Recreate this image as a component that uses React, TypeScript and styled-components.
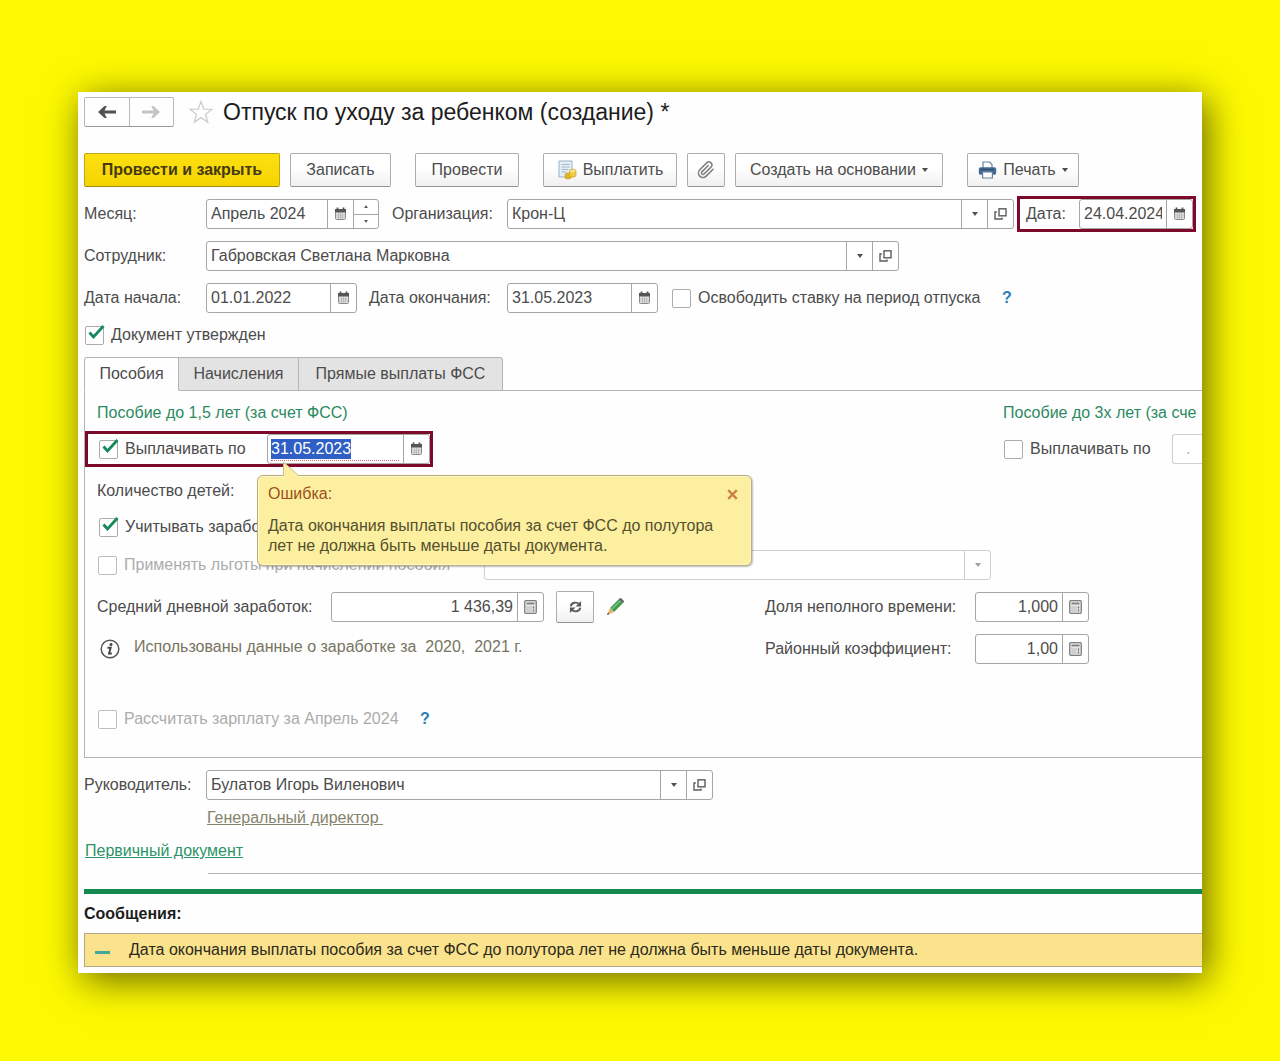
import React, { useEffect, useRef, useState } from 'react';
import styled, { createGlobalStyle } from 'styled-components';

const GlobalStyle = createGlobalStyle`
  * { box-sizing: border-box; }
  body { margin: 0; background: #fdf900; }
  body, button, input, select {
    font-family: "Liberation Sans", Arial, sans-serif;
    font-size: 16px;
    line-height: 20px;
    color: #4c4c4c;
  }
`;

const line = '#a6a6a6';

const Page = styled.main`
  padding: 92px 78px 88px;
`;
const Window = styled.section`
  display: flex;
  flex-direction: column;
  padding: 5px 0 6px 6px;
  background: #fefefe;
  box-shadow: 5px 7px 36px rgba(0, 0, 0, 0.6);
  overflow: hidden;
`;
const TitleBar = styled.header`
  display: flex;
  align-items: center;
  height: 30px;
`;
const NavGroup = styled.div`
  display: flex;
  width: 90px;
  height: 30px;
  border: 1px solid #b9b9b9;
  border-bottom-color: #999;
  border-radius: 2px;
`;
const NavButton = styled.button<{ $muted?: boolean }>`
  flex: 1;
  display: grid;
  place-items: center;
  padding: 0;
  border: 0;
  background: none;
  color: ${(p) => (p.$muted ? '#c4c4c4' : '#505050')};
  & + & { border-left: 1px solid #b9b9b9; }
`;
const StarButton = styled.button`
  display: grid;
  place-items: center;
  width: 24px;
  height: 24px;
  margin: 0 10px 0 15px;
  padding: 0;
  border: 0;
  background: none;
`;
const Title = styled.h1`
  margin: 0;
  font-size: 23px;
  line-height: 28px;
  font-weight: 400;
  color: #1c1c1c;
  white-space: nowrap;
`;
const Toolbar = styled.div`
  display: flex;
  gap: 24px;
  margin-top: 26px;
`;
const ToolGroup = styled.div`
  display: flex;
  gap: 10px;
`;
const ToolButton = styled.button<{ $w: number; $primary?: boolean }>`
  display: flex;
  align-items: center;
  justify-content: center;
  gap: 6px;
  width: ${(p) => p.$w}px;
  height: 34px;
  padding: 0;
  border: 1px solid ${(p) => (p.$primary ? '#c0a51a' : '#adadad')};
  border-bottom-color: ${(p) => (p.$primary ? '#a08a18' : '#919191')};
  border-radius: 2px;
  background: ${(p) => (p.$primary ? 'linear-gradient(#fde011, #f5d400)' : 'linear-gradient(#ffffff 40%, #f0f0f0)')};
  color: ${(p) => (p.$primary ? '#453a10' : '#4c4c4c')};
  font-weight: ${(p) => (p.$primary ? 700 : 400)};
  white-space: nowrap;
`;
const Row = styled.div<{ $mt?: number }>`
  display: flex;
  align-items: center;
  min-height: 30px;
  margin-top: ${(p) => p.$mt ?? 12}px;
  padding-right: 9px;
  white-space: nowrap;
`;
const Label = styled.label<{ $w?: number; $ml?: number }>`
  flex: none;
  width: ${(p) => (p.$w ? `${p.$w}px` : 'auto')};
  margin-left: ${(p) => p.$ml ?? 0}px;
`;
const Field = styled.div<{ $w?: number; $faint?: boolean }>`
  position: relative;
  display: flex;
  flex: ${(p) => (p.$w ? 'none' : '1 1 0')};
  width: ${(p) => (p.$w ? `${p.$w}px` : 'auto')};
  min-width: 0;
  height: 30px;
  border: 1px solid ${(p) => (p.$faint ? '#cfcfcf' : line)};
  border-radius: 3px;
  background: #fff;
`;
const Input = styled.input<{ $right?: boolean; $error?: boolean; $faint?: boolean }>`
  flex: 1 1 0;
  min-width: 0;
  margin: ${(p) => (p.$error ? '0 4px 2px 3px' : '0')};
  padding: ${(p) => (p.$error ? '2px 0 0' : '0 4px 0 4px')};
  border: 0;
  border-bottom: ${(p) => (p.$error ? '1px dotted #d06a7a' : '0')};
  outline: 0;
  background: none;
  color: ${(p) => (p.$faint ? '#acacac' : '#4c4c4c')};
  text-align: ${(p) => (p.$right ? 'right' : 'left')};
  &::selection { background: #2f5fc4; color: #fff; }
`;
const Select = styled.select`
  flex: 1;
  min-width: 0;
  border: 0;
  background: none;
  appearance: none;
`;
const FieldButton = styled.button<{ $faint?: boolean }>`
  flex: none;
  display: grid;
  place-items: center;
  width: 26px;
  padding: 0;
  border: 0;
  border-left: 1px solid ${(p) => (p.$faint ? '#cfcfcf' : line)};
  background: none;
  color: ${(p) => (p.$faint ? '#a0a0a0' : '#505050')};
`;
const Spinner = styled.div`
  display: flex;
  flex-direction: column;
  width: 25px;
  border-left: 1px solid ${line};
`;
const SpinButton = styled.button`
  flex: 1;
  display: grid;
  place-items: center;
  padding: 0;
  border: 0;
  background: none;
  & + & { border-top: 1px solid ${line}; }
`;
const Marked = styled.div<{ $w: number; $ml?: number }>`
  display: flex;
  align-items: center;
  flex: none;
  width: ${(p) => p.$w}px;
  height: 30px;
  margin-left: ${(p) => p.$ml ?? 0}px;
  outline: 3px solid #7d0a2b;
`;
const Check = styled.label<{ $muted?: boolean; $ml?: number; $w?: number }>`
  display: inline-flex;
  flex: none;
  align-items: center;
  gap: 7px;
  width: ${(p) => (p.$w ? `${p.$w}px` : 'auto')};
  margin-left: ${(p) => p.$ml ?? 0}px;
  color: ${(p) => (p.$muted ? '#acacac' : '#4c4c4c')};
`;
const CheckHolder = styled.span`
  position: relative;
  display: inline-flex;
  svg { position: absolute; left: 2px; top: -2px; pointer-events: none; }
`;
const CheckInput = styled.input`
  appearance: none;
  width: 19px;
  height: 19px;
  margin: 0;
  border: 1px solid #acacac;
  border-radius: 2px;
  background: #fff;
  &:disabled { border-color: #bdbdbd; }
`;
const Help = styled.button`
  margin-left: 12px;
  padding: 0;
  border: 0;
  background: none;
  color: #2b7fb5;
  font-weight: 700;
`;
const Tabs = styled.div`
  display: flex;
  margin-top: 7px;
`;
const Tab = styled.button<{ $w: number; $active?: boolean }>`
  position: relative;
  width: ${(p) => p.$w}px;
  height: 34px;
  margin-bottom: -1px;
  padding: 0;
  border: 1px solid #b4b4b4;
  border-left-width: ${(p) => (p.$active ? 1 : 0)}px;
  border-bottom-color: ${(p) => (p.$active ? '#fefefe' : '#b4b4b4')};
  background: ${(p) => (p.$active ? '#fefefe' : '#e3e3e3')};
  &:first-child { border-top-left-radius: 3px; }
  &:last-child { border-top-right-radius: 3px; }
`;
const Panel = styled.div`
  display: flex;
  flex-direction: column;
  padding: 7px 0 23px 12px;
  border: solid #b4b4b4;
  border-width: 1px 0 1px 1px;
`;
const Split = styled.div`
  display: grid;
  grid-template-columns: minmax(0, 1fr) 199px;
`;
const GroupTitle = styled.div`
  line-height: 30px;
  color: #2c8a5f;
  white-space: nowrap;
`;
const SideRow = styled(Row)`
  padding-right: 0;
  overflow: hidden;
`;
const OpenEndField = styled(Field)`
  border-right: 0;
  border-radius: 3px 0 0 3px;
`;
const Bubble = styled.div`
  position: absolute;
  z-index: 2;
  top: 40px;
  left: -11px;
  width: 495px;
  height: 91px;
  padding: 8px 10px;
  border: 1px solid #b9ad7c;
  border-radius: 6px;
  background: #fcefa0;
  box-shadow: inset 0 0 0 1px #fff8cf, 1px 1px 2px rgba(0, 0, 0, 0.25);
  color: #55502f;
`;
const Tail = styled.svg`
  position: absolute;
  left: 24px;
  top: -15px;
`;
const BubbleHead = styled.div`
  display: flex;
  align-items: center;
  justify-content: space-between;
  color: #9a4f1c;
`;
const CloseButton = styled.button`
  display: grid;
  padding: 0;
  margin-right: 3px;
  border: 0;
  background: none;
`;
const BubbleText = styled.p`
  margin: 12px 0 0;
`;
const Earnings = styled.div`
  display: grid;
  grid-template-columns: 668px auto;
`;
const SquareButton = styled.button`
  display: grid;
  place-items: center;
  width: 38px;
  height: 32px;
  margin: -1px 0 -1px 12px;
  padding: 0;
  border: 1px solid #adadad;
  border-bottom-color: #919191;
  border-radius: 2px;
  background: linear-gradient(#fff 40%, #f0f0f0);
`;
const PlainButton = styled.button`
  display: grid;
  margin-left: 12px;
  padding: 0;
  border: 0;
  background: none;
`;
const Info = styled.span`
  margin-left: 14px;
  padding-bottom: 5px;
  color: #77745f;
  white-space: pre;
`;
const Link = styled.a<{ $tone: string; $ml: number; $mt: number }>`
  align-self: flex-start;
  margin: ${(p) => p.$mt}px 0 0 ${(p) => p.$ml}px;
  color: ${(p) => p.$tone};
  white-space: pre;
`;
const Rule = styled.hr`
  width: calc(100% - 124px);
  height: 1px;
  margin: 12px 0 0 124px;
  border: 0;
  background: #b4b4b4;
`;
const Divider = styled.div`
  height: 5px;
  margin-top: 15px;
  background: #15884f;
`;
const MessagesTitle = styled.h2`
  margin: 10px 0 9px;
  font-size: 16px;
  line-height: 20px;
  font-weight: 700;
  color: #1c1c1c;
`;
const Message = styled.div`
  display: flex;
  align-items: center;
  gap: 19px;
  height: 34px;
  padding-left: 10px;
  border: solid #b0a888;
  border-width: 1px 0 1px 1px;
  background: #fae38c;
  color: #2c2a1c;
  white-space: nowrap;
`;
const Dash = styled.span`
  width: 15px;
  height: 3px;
  margin-top: 4px;
  background: #45a79a;
`;

const Arrow = ({ flip }: { flip?: boolean }) => (
  <svg width="18" height="12" viewBox="0 0 18 12" fill="currentColor" transform={flip ? 'scale(-1 1)' : undefined}>
    <path d="M0 6 6.500 0h2.300L6.500 4.600H18v2.800H6.500L8.800 12H6.500z" />
  </svg>
);
const Star = () => (
  <svg width="24" height="24" viewBox="0 0 24 24" fill="#fff" stroke="#cdcdcd" strokeWidth="1.3">
    <path d="m12 1.500 2.800 7.600 8 .3-6.300 5 2.200 7.700L12 17.600l-6.700 4.500 2.200-7.700-6.300-5 8-.3z" />
  </svg>
);
const Calendar = () => (
  <svg width="13" height="14" viewBox="0 0 13 14">
    <rect x="1.500" y="2.500" width="10" height="10" rx="1" fill="#e6e6e6" stroke="#8a8a8a" />
    <path d="M1 2h11v3.500H1z" fill="#555" />
    <path d="M3.500 .5v2.500M9.500 .5v2.500" stroke="#555" strokeWidth="1.800" />
    <path d="M2 8h9M2 10.200h9M4.500 6v6M6.500 6v6M8.500 6v6" stroke="#b0b0b0" strokeWidth=".7" />
  </svg>
);
const Calculator = () => (
  <svg width="13" height="14" viewBox="0 0 13 14">
    <rect x=".7" y=".7" width="11.600" height="12.600" rx="1" fill="#e6e6e6" stroke="#808080" strokeWidth="1.300" />
    <path d="M2.500 3.500h8" stroke="#808080" strokeWidth="1.800" />
    <path d="M2.500 7h5M2.500 9h5M2.500 11h5" stroke="#a0a0a0" strokeDasharray="1.200 .8" />
    <path d="M9.500 6.500v2M9.500 9.500v2" stroke="#707070" strokeWidth="1.300" />
  </svg>
);
const Caret = () => (
  <svg width="6" height="4" viewBox="0 0 6 4"><path d="M0 0h6L3 4z" fill="currentColor" /></svg>
);
const TinyMark = ({ up }: { up?: boolean }) => (
  <svg width="4" height="3" viewBox="0 0 4 3"><path d={up ? 'M0 3h4L2 0z' : 'M0 0h4L2 3z'} fill="#606060" /></svg>
);
const OpenIcon = () => (
  <svg width="13" height="12" viewBox="0 0 13 12" fill="none" stroke="#5c5c5c" strokeWidth="1.400">
    <rect x="5" y=".8" width="7" height="7" />
    <path d="M2.800 4H1v7h7V9.500" />
  </svg>
);
const Tick = () => (
  <svg width="19" height="18" viewBox="0 0 19 18" fill="none">
    <path d="M2.500 8.500 6.500 13 16.500 2" stroke="#16885a" strokeWidth="2.800" />
  </svg>
);
const PayIcon = () => (
  <svg width="20" height="20" viewBox="0 0 20 20">
    <path d="M2 1h13v16H2z" fill="#e4eef6" stroke="#9db2c4" />
    <path d="M4.500 4.500h8M4.500 7h8M4.500 9.500h7M4.500 12h5" stroke="#a4bacb" />
    <path d="M8 14.500c0-2 6-2 6 0v3c0 2-6 2-6 0z" fill="#e3b62a" stroke="#c99a1b" strokeWidth=".6" />
    <path d="M12.500 11c0-2.200 6.500-2.200 6.500 0v4.500c0 2.200-6.500 2.200-6.500 0z" fill="#f0ca45" stroke="#c99a1b" strokeWidth=".6" />
    <ellipse cx="15.700" cy="11" rx="2.800" ry="1.300" fill="#fae58c" />
  </svg>
);
const Clip = () => (
  <svg width="18" height="18" viewBox="0 0 24 24" fill="none" stroke="#7d7d7d" strokeWidth="2" strokeLinecap="round">
    <path d="m21.400 11-9.200 9.200a6 6 0 0 1-8.500-8.500l9.200-9.200a4 4 0 0 1 5.700 5.700l-9.200 9.200a2 2 0 0 1-2.900-2.900L15 6.100" />
  </svg>
);
const Printer = () => (
  <svg width="19" height="18" viewBox="0 0 19 18">
    <path d="M5 7V1h6.500L14 3.500V7" fill="#fff" stroke="#68839f" strokeWidth="1.200" />
    <rect x=".8" y="6.300" width="17.400" height="7.500" rx="1.800" fill="#456b93" />
    <path d="M3 8.500h13" stroke="#2e4e70" strokeWidth="1.200" />
    <path d="M4.600 11h9.800v6H4.600z" fill="#fff" stroke="#68839f" strokeWidth="1.200" />
  </svg>
);
const Refresh = () => (
  <svg width="13" height="12" viewBox="0 0 15 14" fill="none" stroke="#5a5a5a" strokeWidth="2.200">
    <path d="M2 6.200C2.500 1.500 9 .5 12 4M13 7.800C12.500 12.500 6 13.500 3 10" />
    <path d="M14 0v6.500H7.500zM1 14V7.500h6.500z" fill="#5a5a5a" stroke="none" />
  </svg>
);
const Pencil = () => (
  <svg width="18" height="18" viewBox="0 0 18 18">
    <path d="m4 10 8.500-8.500 4 4L8 14z" fill="#3f9b4c" />
    <path d="m5.500 11.500 8.500-8.500" stroke="#7cc680" strokeWidth="1.500" />
    <path d="m12.500 1.500 1-1q1-1 2 0l2 2q1 1 0 2l-1 1z" fill="#5e6f62" />
    <path d="M4 10 1 17l7-3z" fill="#e0b66e" />
    <path d="M2 14.500 1 17l2.500-1z" fill="#59452c" />
  </svg>
);
const InfoIcon = () => (
  <svg width="20" height="20" viewBox="0 0 20 20" fill="none" stroke="#555">
    <circle cx="10" cy="10" r="8.800" strokeWidth="1.500" />
    <circle cx="11" cy="5.500" r="1.500" fill="#444" stroke="none" />
    <path d="M7.500 8.800h3.200L9 14.500h2.800" stroke="#444" strokeWidth="1.900" />
  </svg>
);
const CloseIcon = () => (
  <svg width="11" height="11" viewBox="0 0 11 11"><path d="m1.200 1.200 8.600 8.600m0-8.600-8.600 8.600" stroke="#cc8146" strokeWidth="2.400" /></svg>
);

type ButtonKind = 'calendar' | 'calculator' | 'list' | 'open';
const kinds: Record<ButtonKind, { name: string; icon: React.ReactNode }> = {
  calendar: { name: 'Выбрать дату', icon: <Calendar /> },
  calculator: { name: 'Калькулятор', icon: <Calculator /> },
  list: { name: 'Выбрать из списка', icon: <Caret /> },
  open: { name: 'Открыть', icon: <OpenIcon /> },
};

interface TextFieldProps {
  id: string;
  value: string;
  w?: number;
  right?: boolean;
  buttons: ButtonKind[];
  children?: React.ReactNode;
}
const TextField = ({ id, value, w, right, buttons, children }: TextFieldProps) => {
  const [text, setText] = useState(value);
  return (
    <Field $w={w}>
      <Input id={id} value={text} $right={right} onChange={(e) => setText(e.target.value)} />
      {buttons.map((kind) => (
        <FieldButton key={kind} type="button" aria-label={kinds[kind].name}>{kinds[kind].icon}</FieldButton>
      ))}
      {children}
    </Field>
  );
};

interface CheckBoxProps {
  text: string;
  on?: boolean;
  disabled?: boolean;
  ml?: number;
  w?: number;
}
const CheckBox = ({ text, on = false, disabled, ml, w }: CheckBoxProps) => {
  const [checked, setChecked] = useState(on);
  return (
    <Check $muted={disabled} $ml={ml} $w={w}>
      <CheckHolder>
        <CheckInput type="checkbox" checked={checked} disabled={disabled} onChange={(e) => setChecked(e.target.checked)} />
        {checked && <Tick />}
      </CheckHolder>
      {text}
    </Check>
  );
};

const PayUntil = () => {
  const ref = useRef<HTMLInputElement>(null);
  const [open, setOpen] = useState(true);
  const [date, setDate] = useState('31.05.2023');
  useEffect(() => {
    ref.current?.focus({ preventScroll: true });
    ref.current?.select();
  }, []);
  return (
    <Field $w={163}>
      <Input ref={ref} aria-label="Выплачивать по" value={date} $error onChange={(e) => setDate(e.target.value)} />
      <FieldButton type="button" aria-label="Выбрать дату"><Calendar /></FieldButton>
      {open && (
        <Bubble role="alert">
          <Tail width="20" height="17" viewBox="0 0 20 17">
            <path d="M1.500 17V1L17 15.500V17z" fill="#fcefa0" />
            <path d="M1.500 15V1L17 15" fill="none" stroke="#c9bd8a" />
          </Tail>
          <BubbleHead>
            <span>Ошибка:</span>
            <CloseButton type="button" aria-label="Закрыть" onClick={() => setOpen(false)}><CloseIcon /></CloseButton>
          </BubbleHead>
          <BubbleText>Дата окончания выплаты пособия за счет ФСС до полутора<br />лет не должна быть меньше даты документа.</BubbleText>
        </Bubble>
      )}
    </Field>
  );
};

export default function App() {
  return (
    <Page>
      <GlobalStyle />
      <Window>
        <TitleBar>
          <NavGroup>
            <NavButton type="button" aria-label="Назад"><Arrow /></NavButton>
            <NavButton type="button" aria-label="Вперед" $muted><Arrow flip /></NavButton>
          </NavGroup>
          <StarButton type="button" aria-label="В избранное"><Star /></StarButton>
          <Title>Отпуск по уходу за ребенком (создание) *</Title>
        </TitleBar>

        <Toolbar>
          <ToolGroup>
            <ToolButton type="button" $w={196} $primary>Провести и закрыть</ToolButton>
            <ToolButton type="button" $w={101}>Записать</ToolButton>
          </ToolGroup>
          <ToolButton type="button" $w={104}>Провести</ToolButton>
          <ToolGroup>
            <ToolButton type="button" $w={134}><PayIcon />Выплатить</ToolButton>
            <ToolButton type="button" $w={38} aria-label="Присоединенные файлы"><Clip /></ToolButton>
            <ToolButton type="button" $w={208}>Создать на основании<Caret /></ToolButton>
          </ToolGroup>
          <ToolButton type="button" $w={112}><Printer />Печать<Caret /></ToolButton>
        </Toolbar>

        <Row>
          <Label htmlFor="month" $w={122}>Месяц:</Label>
          <TextField id="month" value="Апрель 2024" w={173} buttons={['calendar']}>
            <Spinner>
              <SpinButton type="button" aria-label="Следующий месяц"><TinyMark up /></SpinButton>
              <SpinButton type="button" aria-label="Предыдущий месяц"><TinyMark /></SpinButton>
            </Spinner>
          </TextField>
          <Label htmlFor="org" $w={115} $ml={13}>Организация:</Label>
          <TextField id="org" value="Крон-Ц" buttons={['list', 'open']} />
          <Marked $w={173} $ml={6}>
            <Label htmlFor="date" $w={53} $ml={6}>Дата:</Label>
            <TextField id="date" value="24.04.2024" buttons={['calendar']} />
          </Marked>
        </Row>

        <Row>
          <Label htmlFor="employee" $w={122}>Сотрудник:</Label>
          <TextField id="employee" value="Габровская Светлана Марковна" w={693} buttons={['list', 'open']} />
        </Row>

        <Row>
          <Label htmlFor="start" $w={122}>Дата начала:</Label>
          <TextField id="start" value="01.01.2022" w={151} buttons={['calendar']} />
          <Label htmlFor="end" $w={138} $ml={12}>Дата окончания:</Label>
          <TextField id="end" value="31.05.2023" w={151} buttons={['calendar']} />
          <CheckBox text="Освободить ставку на период отпуска" ml={14} w={318} />
          <Help type="button">?</Help>
        </Row>

        <Row $mt={7}>
          <CheckBox text="Документ утвержден" on ml={1} />
        </Row>

        <Tabs role="tablist">
          <Tab type="button" role="tab" $w={95} $active>Пособия</Tab>
          <Tab type="button" role="tab" $w={120}>Начисления</Tab>
          <Tab type="button" role="tab" $w={204}>Прямые выплаты ФСС</Tab>
        </Tabs>

        <Panel>
          <Split>
            <GroupTitle>Пособие до 1,5 лет (за счет ФСС)</GroupTitle>
            <GroupTitle>Пособие до 3х лет (за сче</GroupTitle>
            <Row $mt={6}>
              <Marked $w={342} $ml={-9}>
                <CheckBox text="Выплачивать по" on ml={11} w={168} />
                <PayUntil />
              </Marked>
            </Row>
            <SideRow $mt={6}>
              <CheckBox text="Выплачивать по" ml={1} w={168} />
              <OpenEndField $faint>
                <Input aria-label="Выплачивать до 3х лет по" defaultValue="  ." $faint />
              </OpenEndField>
            </SideRow>
          </Split>
          <Row>Количество детей:</Row>
          <Row $mt={6}>
            <CheckBox text="Учитывать зарабо" on ml={2} />
          </Row>
          <Row $mt={8}>
            <CheckBox text="Применять льготы при начислении пособия" disabled ml={1} w={386} />
            <Field $w={507} $faint>
              <Select aria-label="Льгота" disabled><option value="" /></Select>
              <FieldButton type="button" aria-label="Выбрать из списка" $faint><Caret /></FieldButton>
            </Field>
          </Row>
          <Earnings>
            <Row>
              <Label htmlFor="average" $w={234}>Средний дневной заработок:</Label>
              <TextField id="average" value="1 436,39" w={213} right buttons={['calculator']} />
              <SquareButton type="button" aria-label="Обновить"><Refresh /></SquareButton>
              <PlainButton type="button" aria-label="Изменить"><Pencil /></PlainButton>
            </Row>
            <Row>
              <Label htmlFor="share" $w={210}>Доля неполного времени:</Label>
              <TextField id="share" value="1,000" w={114} right buttons={['calculator']} />
            </Row>
            <Row>
              <Label as="span" $w={3} />
              <InfoIcon />
              <Info>Использованы данные о заработке за  2020,  2021 г.</Info>
            </Row>
            <Row>
              <Label htmlFor="ratio" $w={210}>Районный коэффициент:</Label>
              <TextField id="ratio" value="1,00" w={114} right buttons={['calculator']} />
            </Row>
          </Earnings>
          <Row $mt={40}>
            <CheckBox text="Рассчитать зарплату за Апрель 2024" disabled ml={1} w={310} />
            <Help type="button">?</Help>
          </Row>
        </Panel>

        <Row>
          <Label htmlFor="chief" $w={122}>Руководитель:</Label>
          <TextField id="chief" value="Булатов Игорь Виленович" w={507} buttons={['list', 'open']} />
        </Row>
        <Link href="#position" $tone="#86836c" $ml={123} $mt={8}>{'Генеральный директор '}</Link>
        <Link href="#source" $tone="#2c9468" $ml={1} $mt={13}>Первичный документ</Link>
        <Rule />
        <Divider />
        <MessagesTitle>Сообщения:</MessagesTitle>
        <Message>
          <Dash />
          Дата окончания выплаты пособия за счет ФСС до полутора лет не должна быть меньше даты документа.
        </Message>
      </Window>
    </Page>
  );
}
